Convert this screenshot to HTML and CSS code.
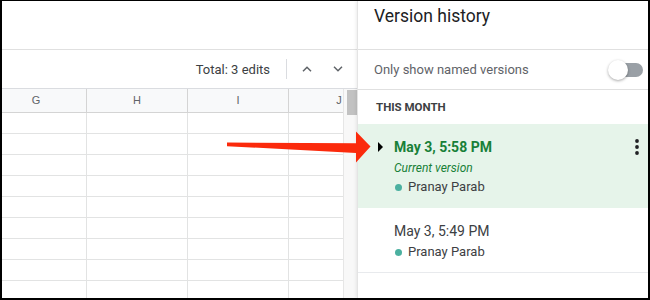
FILE: index.html
```html
<!DOCTYPE html>
<html lang="en">
<head>
  <meta charset="UTF-8" />
  <meta name="viewport" content="width=device-width, initial-scale=1.0"/>
  <title>Version history</title>
  <link rel="stylesheet" href="styles.css">
</head>
<body>
  <div class="frame">
    <div class="sheet">
      <div class="sheet-top"></div>
      <div class="toolbar">
        <span class="total">Total: 3 edits</span>
        <span class="sep"></span>
        <svg class="caret caret-up" width="10" height="6" viewBox="0 0 10 6"><polyline points="1,5.2 5,1.2 9,5.2" /></svg>
        <svg class="caret" width="10" height="6" viewBox="0 0 10 6"><polyline points="1,0.8 5,4.8 9,0.8" /></svg>
      </div>
      <div class="grid-area">
        <div class="grid-clip">
          <div class="grid">
            <div class="row head"><div class="cell">G</div><div class="cell">H</div><div class="cell">I</div><div class="cell">J</div></div>
            <div class="row"><div class="cell"></div><div class="cell"></div><div class="cell"></div><div class="cell"></div></div>
            <div class="row"><div class="cell"></div><div class="cell"></div><div class="cell"></div><div class="cell"></div></div>
            <div class="row"><div class="cell"></div><div class="cell"></div><div class="cell"></div><div class="cell"></div></div>
            <div class="row"><div class="cell"></div><div class="cell"></div><div class="cell"></div><div class="cell"></div></div>
            <div class="row"><div class="cell"></div><div class="cell"></div><div class="cell"></div><div class="cell"></div></div>
            <div class="row"><div class="cell"></div><div class="cell"></div><div class="cell"></div><div class="cell"></div></div>
            <div class="row"><div class="cell"></div><div class="cell"></div><div class="cell"></div><div class="cell"></div></div>
            <div class="row"><div class="cell"></div><div class="cell"></div><div class="cell"></div><div class="cell"></div></div>
            <div class="row"><div class="cell"></div><div class="cell"></div><div class="cell"></div><div class="cell"></div></div>
          </div>
        </div>
        <div class="scrollbar"><div class="thumb"></div></div>
      </div>
    </div>

    <aside class="panel">
      <div class="panel-head">
        <h1>Version history</h1>
      </div>
      <div class="named-row">
        <span>Only show named versions</span>
        <span class="switch"><span class="track"></span><span class="knob"></span></span>
      </div>
      <div class="group-label">THIS MONTH</div>

      <div class="version current">
        <div class="v-title">
          <span class="expand"></span>
          <span class="v-date">May 3, 5:58 PM</span>
          <svg class="kebab" width="4" height="16" viewBox="0 0 4 16">
            <circle cx="2" cy="2" r="1.9" />
            <circle cx="2" cy="8" r="1.9" />
            <circle cx="2" cy="14" r="1.9" />
          </svg>
        </div>
        <div class="v-note">Current version</div>
        <div class="v-author"><span class="dot"></span>Pranay Parab</div>
      </div>

      <div class="version">
        <div class="v-title">
          <span class="v-date">May 3, 5:49 PM</span>
        </div>
        <div class="v-author"><span class="dot"></span>Pranay Parab</div>
      </div>
    </aside>

    <svg class="arrow" width="650" height="300" viewBox="0 0 650 300">
      <polygon points="227,142.6 356,143.2 356,131.5 370.5,146.5 356,162.5 356,153 227,146.2" />
    </svg>
  </div>
</body>
</html>
```

FILE: styles.css
```css
* {
  margin: 0;
  padding: 0;
  box-sizing: border-box;
}

body {
  background: #fff;
  font-family: 'Roboto', 'Liberation Sans', sans-serif;
  color: #3c4043;
}

.frame {
  position: relative;
  width: 650px;
  height: 300px;
  border: 2px solid #000;
  border-top-width: 1px;
  display: flex;
  overflow: hidden;
}

/* spreadsheet side */
.sheet {
  width: 355px;
  display: flex;
  flex-direction: column;
}

.sheet-top {
  height: 49px;
  border-bottom: 1px solid #e0e0e0;
}

.toolbar {
  height: 39px;
  border-bottom: 1px solid #dadce0;
  display: flex;
  align-items: center;
  justify-content: flex-end;
  padding-right: 14px;
}

.total {
  font-size: 13px;
  color: #3c4043;
}

.sep {
  width: 1px;
  height: 20px;
  background: #dadce0;
  margin: 0 15px 0 16px;
}

.caret polyline {
  fill: none;
  stroke: #5f6368;
  stroke-width: 1.5;
}

.caret-up {
  margin-right: 21px;
}

.grid-area {
  flex: 1;
  display: flex;
  min-height: 0;
}

.grid-clip {
  width: 341px;
  overflow: hidden;
}

.grid {
  margin-left: -16px;
  width: 404px;
}

.row {
  display: grid;
  grid-template-columns: repeat(4, 101px);
  height: 21px;
  border-bottom: 1px solid #e2e3e3;
}

.cell {
  border-right: 1px solid #e2e3e3;
}

.row.head {
  height: 24px;
  background: #f8f9fa;
  border-bottom-color: #d4d4d4;
}

.row.head .cell {
  border-right-color: #d4d4d4;
  font-family: 'Liberation Sans', Arial, sans-serif;
  font-size: 11px;
  color: #5f6368;
  text-align: center;
  line-height: 23px;
}

.scrollbar {
  width: 14px;
  background: #f8f8f8;
  border-left: 1px solid #e6e6e6;
  padding: 1px 0 0 3px;
}

.thumb {
  width: 10px;
  height: 25px;
  background: #c2c2c2;
}

/* version history panel */
.panel {
  flex: 1;
  border-left: 1px solid #e4e4e4;
  box-shadow: -1px 0 3px rgba(0, 0, 0, 0.08);
  display: flex;
  flex-direction: column;
  position: relative;
}

.panel-head {
  height: 49px;
  border-bottom: 1px solid #e0e0e0;
  padding: 5px 0 0 16px;
}

.panel-head h1 {
  font-size: 17.5px;
  font-weight: 400;
  line-height: 20px;
  color: #202124;
}

.named-row {
  height: 40px;
  border-bottom: 1px solid #e0e0e0;
  display: flex;
  align-items: center;
  justify-content: space-between;
  padding: 0 5px 0 16px;
  font-size: 13px;
  color: #5f6368;
}

.switch {
  position: relative;
  width: 35px;
  height: 20px;
}

.track {
  position: absolute;
  left: 4px;
  right: 0;
  top: 3px;
  height: 14px;
  border-radius: 7px;
  background: #9aa0a6;
}

.knob {
  position: absolute;
  left: 0;
  top: 0;
  width: 20px;
  height: 20px;
  border-radius: 50%;
  background: #fff;
  box-shadow: 0 1px 3px rgba(0, 0, 0, 0.35);
}

.group-label {
  height: 34px;
  display: flex;
  align-items: center;
  padding-left: 18px;
  font-size: 11.5px;
  font-weight: 700;
  color: #3c4043;
}

.version {
  padding: 13px 9px 12px 36px;
  border-bottom: 1px solid #e8eaed;
}

.version.current {
  background: #e6f4ea;
  border-bottom: none;
  padding-bottom: 11px;
}

.v-title {
  display: flex;
  align-items: center;
  height: 19px;
}

.current .v-title {
  height: 20px;
}

.expand {
  width: 0;
  height: 0;
  border-left: 5px solid #000;
  border-top: 5px solid transparent;
  border-bottom: 5px solid transparent;
  margin-left: -16px;
  margin-right: 11px;
}

.v-date {
  flex: 1;
  font-size: 14px;
  color: #3c4043;
}

.current .v-date {
  font-weight: 700;
  color: #188038;
}

.kebab circle {
  fill: #202124;
}

.v-note {
  margin-top: 2px;
  font-size: 12px;
  line-height: 18px;
  font-style: italic;
  color: #188038;
}

.v-author {
  display: flex;
  align-items: center;
  margin-top: 4px;
  font-size: 13px;
  line-height: 16px;
  color: #3c4043;
}

.current .v-author {
  line-height: 20px;
  margin-top: 0;
}

.dot {
  width: 7px;
  height: 7px;
  border-radius: 50%;
  background: #4bb0a0;
  margin: 0 6px 0 1px;
}

.arrow {
  position: absolute;
  left: -2px;
  top: -1px;
  pointer-events: none;
}

.arrow polygon {
  fill: #fb2a0c;
}
```
